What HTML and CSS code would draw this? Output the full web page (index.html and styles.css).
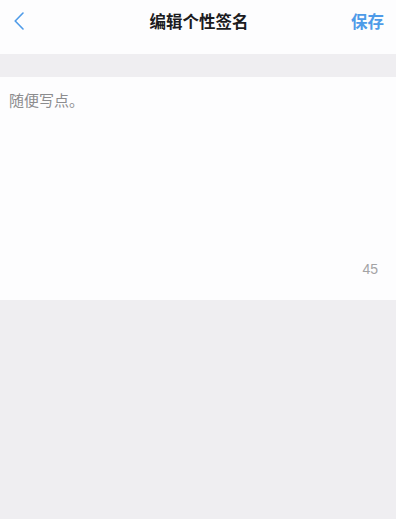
FILE: index.html
```
<!DOCTYPE html>
<html lang="zh">
<head>
<meta charset="utf-8">
<title>编辑个性签名</title>
<link rel="stylesheet" href="styles.css">
</head>
<body>
<div class="page">
  <header class="nav">
    <button class="back" aria-label="返回">
      <svg width="10" height="18" viewBox="0 0 10 18"><path d="M9 1 L1.2 9 L9 17" fill="none" stroke="#4e9be8" stroke-width="1.6" stroke-linecap="round" stroke-linejoin="round"/></svg>
    </button>
    <h1 class="title">编辑个性签名</h1>
    <button class="save">保存</button>
  </header>
  <div class="gap"></div>
  <section class="editor">
    <textarea class="input" placeholder="随便写点。"></textarea>
    <div class="count">45</div>
  </section>
  <div class="rest"></div>
</div>
</body>
</html>
```
FILE: styles.css
```
html, body {
  margin: 0;
  padding: 0;
  height: 100%;
}
body {
  background: #efeef1;
  font-family: "Noto Sans CJK SC", "Liberation Sans", sans-serif;
}
.page {
  display: flex;
  flex-direction: column;
  min-height: 100%;
}
.nav {
  height: 54px;
  background: #fdfdfe;
  display: flex;
  align-items: flex-start;
  justify-content: space-between;
  padding: 0 12px 0 14px;
}
.back {
  background: none;
  border: 0;
  padding: 0;
  margin-top: 12px;
  width: 30px;
  height: 18px;
  display: flex;
  align-items: center;
  justify-content: flex-start;
}
.title {
  margin: 0;
  margin-top: 7px;
  margin-left: 6px;
  font-size: 16.5px;
  line-height: 28px;
  font-weight: 700;
  color: #1c1c1e;
}
.save {
  background: none;
  border: 0;
  padding: 0;
  margin-top: 7px;
  font-family: inherit;
  font-size: 16.5px;
  line-height: 28px;
  font-weight: 700;
  color: #4e9be8;
  width: 36px;
  text-align: right;
}
.gap {
  height: 23px;
}
.editor {
  background: #fdfdfe;
  height: 223px;
  display: flex;
  flex-direction: column;
  padding: 12px 18px 23px 9px;
  box-sizing: border-box;
}
.input {
  flex: 1;
  border: 0;
  outline: none;
  resize: none;
  background: transparent;
  padding: 0;
  margin: 0;
  font-family: inherit;
  font-size: 15px;
  line-height: 22px;
  color: #333;
}
.input::placeholder {
  color: #8c8c8e;
}
.count {
  align-self: flex-end;
  font-family: "Liberation Sans", Arial, sans-serif;
  font-size: 14px;
  line-height: 16px;
  color: #a3a3a5;
}
.rest {
  flex: 1;
}
```
